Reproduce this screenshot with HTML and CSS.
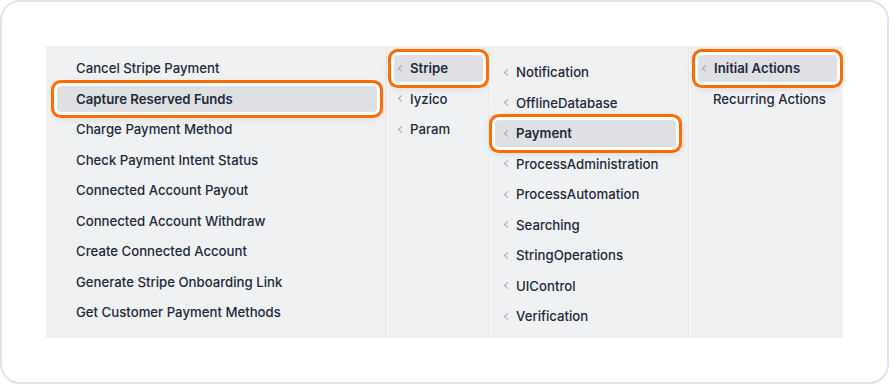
FILE: index.html
```html
<!DOCTYPE html>
<html lang="en">
<head>
    <meta charset="UTF-8">
    <meta name="viewport" content="width=device-width, initial-scale=1.0">
    <title>Action Menu</title>
    <link rel="stylesheet" href="styles.css">
</head>
<body>
    <div class="card">
        <div class="menu">
            <div class="column col-actions">
                <div class="item">Cancel Stripe Payment</div>
                <div class="item active">Capture Reserved Funds</div>
                <div class="item">Charge Payment Method</div>
                <div class="item">Check Payment Intent Status</div>
                <div class="item">Connected Account Payout</div>
                <div class="item">Connected Account Withdraw</div>
                <div class="item">Create Connected Account</div>
                <div class="item">Generate Stripe Onboarding Link</div>
                <div class="item">Get Customer Payment Methods</div>
            </div>
            <div class="column col-providers">
                <div class="item active"><span class="chev"></span>Stripe</div>
                <div class="item"><span class="chev"></span>Iyzico</div>
                <div class="item"><span class="chev"></span>Param</div>
            </div>
            <div class="column col-groups">
                <div class="item"><span class="chev"></span>Notification</div>
                <div class="item"><span class="chev"></span>OfflineDatabase</div>
                <div class="item active"><span class="chev"></span>Payment</div>
                <div class="item"><span class="chev"></span>ProcessAdministration</div>
                <div class="item"><span class="chev"></span>ProcessAutomation</div>
                <div class="item"><span class="chev"></span>Searching</div>
                <div class="item"><span class="chev"></span>StringOperations</div>
                <div class="item"><span class="chev"></span>UIControl</div>
                <div class="item"><span class="chev"></span>Verification</div>
            </div>
            <div class="column col-types">
                <div class="item active"><span class="chev"></span>Initial Actions</div>
                <div class="item plain">Recurring Actions</div>
            </div>
        </div>
    </div>
</body>
</html>
```

FILE: styles.css
```css
body {
    margin: 0;
    background: #fff;
    font-family: Inter, "Noto Sans", sans-serif;
}
.card {
    box-sizing: border-box;
    width: 889px;
    height: 384px;
    border: 2px solid #dfe2e6;
    border-radius: 20px;
    padding: 44px 44px 0 44px;
}
.menu {
    display: grid;
    grid-template-columns: 340px 103px 199px 155px;
    background: #f0f1f3;
}
.column {
    display: flex;
    flex-direction: column;
    gap: 4px;
    padding: 7px 6px 10px 7px;
    margin: 2px 0;
    border-left: 1px solid #e3e5e9;
    box-shadow: inset 1px 0 0 #fbfbfc;
}
.col-actions {
    padding-left: 11px;
    padding-right: 9px;
    border-left: none;
    box-shadow: none;
}
.col-groups {
    padding-top: 11px;
    padding-bottom: 6px;
    padding-left: 5px;
    padding-right: 12px;
}
.col-types {
    padding-left: 9px;
}
.item {
    display: flex;
    align-items: center;
    height: 26.5px;
    padding-left: 3px;
    border-radius: 4px;
    font-size: 13.2px;
    font-weight: 500;
    color: #222a3a;
    white-space: nowrap;
}
.col-actions .item {
    padding-left: 19px;
}
.col-groups .item {
    padding-left: 8px;
}
.item.plain {
    padding-left: 15px;
}
.chev {
    width: 4px;
    height: 4px;
    margin: 0 6px 0 2px;
    border-left: 1.3px solid #a3a8b0;
    border-bottom: 1.3px solid #a3a8b0;
    transform: rotate(45deg);
}
.item.active {
    font-weight: 600;
    background: #dfe0e4;
    box-shadow: 0 0 0 3px #fff, 0 0 0 6px #ff6c02, 0 2px 8px 4px rgba(0, 0, 0, 0.12);
}
```
